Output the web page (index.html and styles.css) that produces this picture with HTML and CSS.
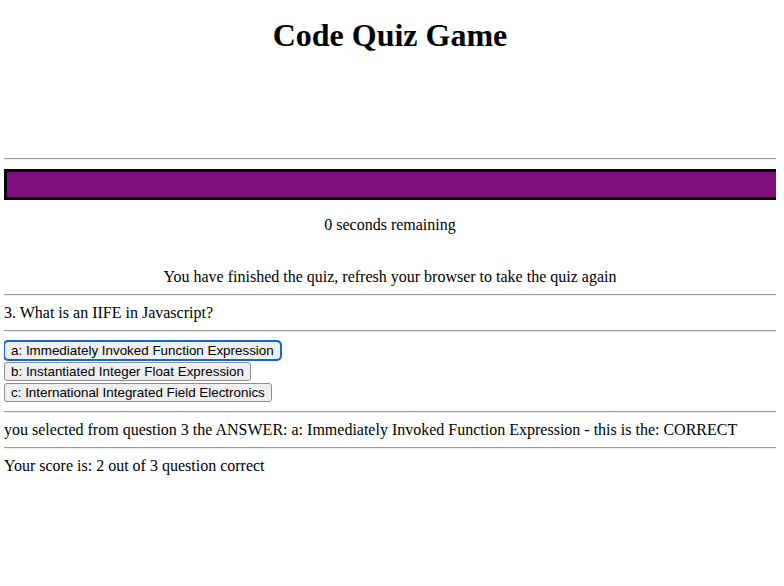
FILE: index.html
```html
<!DOCTYPE html>
<html lang="en">
<head>
<meta charset="utf-8">
<title>Code Quiz Game</title>
<link rel="stylesheet" href="styles.css">
</head>
<body>
<header class="header">
  <h1 class="title">Code Quiz Game</h1>
</header>
<hr class="rule">
<div class="timer-bar"></div>
<p class="timer-text">0 seconds remaining</p>
<div class="status">You have finished the quiz, refresh your browser to take the quiz again</div>
<hr class="rule">
<div class="question">3. What is an IIFE in Javascript?</div>
<hr class="rule">
<div class="answers">
  <button class="answer answer-focus">a: Immediately Invoked Function Expression</button>
  <button class="answer">b: Instantiated Integer Float Expression</button>
  <button class="answer">c: International Integrated Field Electronics</button>
</div>
<hr class="rule">
<div class="line">you selected from question 3 the ANSWER: a: Immediately Invoked Function Expression - this is the: CORRECT</div>
<hr class="rule">
<div class="line">Your score is: 2 out of 3 question correct</div>
</body>
</html>
```
FILE: styles.css
```css
html, body {
  background: #ffffff;
}
body {
  margin: 0 8px 0 4px;
  font-family: "Liberation Serif", "Times New Roman", serif;
  font-size: 16px;
  line-height: 18px;
  color: #000;
}
.header {
  height: 150px;
  overflow: hidden;
}
.title {
  margin: 17px 0 0;
  font-size: 32px;
  line-height: 37px;
  font-weight: bold;
  text-align: center;
}
.rule {
  margin: 8px 0;
  height: 0;
  border: 0;
  border-top: 1px solid #9a9a9a;
  border-bottom: 1px solid #eeeeee;
}
.timer-bar {
  height: 25px;
  background: #800f7e;
  border: 3px solid #000;
  margin: 9px -7px 0 0;
}
.timer-text {
  margin: 16px 0 34px;
  text-align: center;
}
.status {
  text-align: center;
}
.answers {
  display: flex;
  flex-direction: column;
  align-items: flex-start;
  gap: 2px;
  padding: 1px 0;
}
.answer {
  font-family: "Liberation Sans", Arial, sans-serif;
  font-size: 13.4px;
  line-height: 15px;
  padding: 1px 6px;
  background: #efefef;
  color: #000;
  border: 1px solid #8f8f8f;
  border-radius: 3px;
  margin: 0;
}
.answer-focus {
  outline: 2px solid #1565d0;
  outline-offset: -1px;
  border-radius: 4px;
}
```
